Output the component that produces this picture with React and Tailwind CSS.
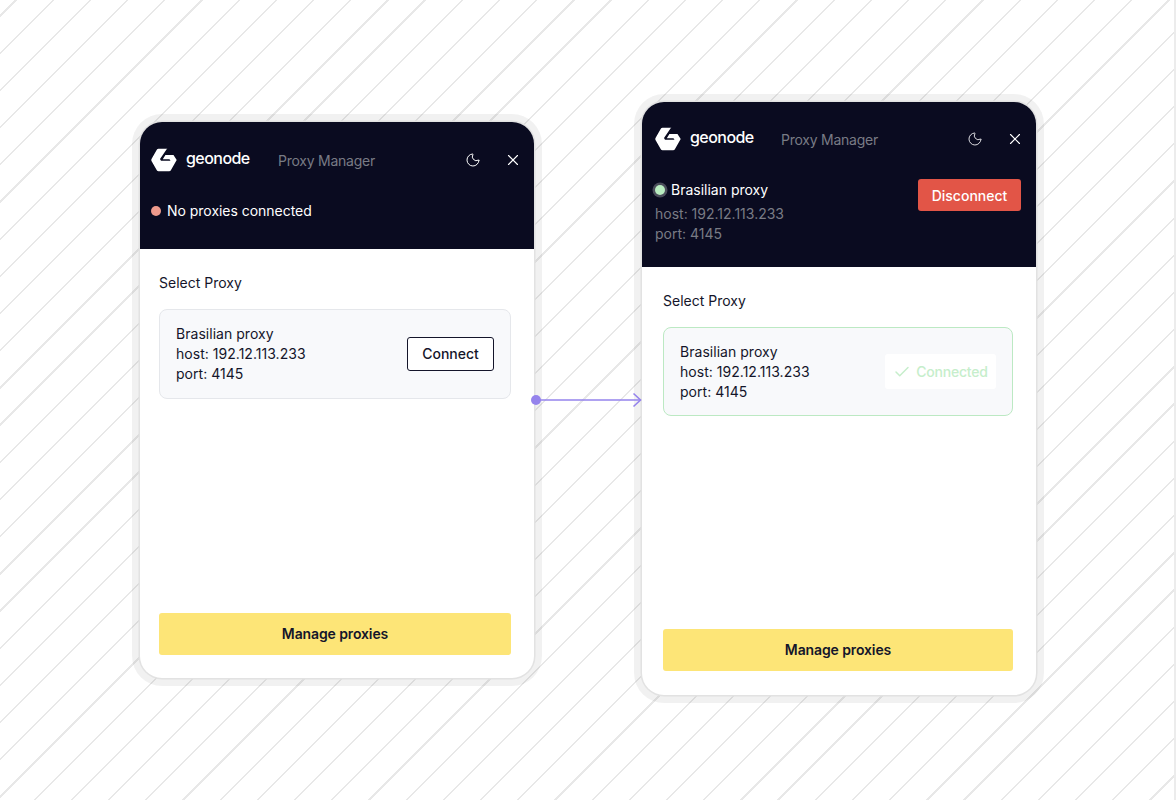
import React from "react";
import { Moon, X, Check } from "lucide-react";

function Logo() {
  return (
    <svg width="26" height="24" viewBox="0 0 26 24" className="shrink-0">
      <path fill="#fff" d="M7.5 0.8 L18.5 0.8 L25.7 12 L20 22 Q19.5 23.2 18 23.2 L7.5 23.2 Q6.3 23.2 5.8 22.2 L0.5 13 Q0 12 0.5 11 L5.8 1.8 Q6.3 0.8 7.5 0.8 Z" />
      <path fill="#0a0b20" d="M16.5 0 L26 0 L26 7 L14.4 7 L11.8 11.3 L18.5 11.3 L19.5 12.8 L10 12.8 L9 11 Z" />
    </svg>
  );
}

function Header({ titleWidth, iconMuted }) {
  return (
    <div className="flex items-center justify-between h-[24px]">
      <div className="flex items-center">
        <Logo />
        <span className={"ml-[9px] text-[16px] leading-none font-medium text-white tracking-[-0.55px] -mt-[4px] " + titleWidth}>geonode</span>
        <span className="text-[14px] text-[#797b85] tracking-[-0.25px]">Proxy Manager</span>
      </div>
      <div className="flex items-center gap-[23px] mr-[12px]">
        <Moon size={16} strokeWidth={1.5} className={iconMuted ? "text-[#dcdce0]" : "text-white"} />
        <X size={18} strokeWidth={1.5} className="text-white" />
      </div>
    </div>
  );
}

function Panel({ className, children }) {
  return (
    <div className={"w-[394px] flex flex-col rounded-[22px] overflow-hidden bg-white shadow-[0_0_0_1.5px_#e2e2e2,0_0_0_8px_rgba(0,0,0,0.055)] " + className}>
      {children}
    </div>
  );
}

function ProxyInfo() {
  return (
    <div className="text-[14px] leading-[20px] text-[#14152a] tracking-[0.03px]">
      <div>Brasilian proxy</div>
      <div>host: 192.12.113.233</div>
      <div>port: 4145</div>
    </div>
  );
}

function ManageButton({ className }) {
  return (
    <button className={"h-[42px] pb-[2px] rounded-[3px] bg-[#fde577] text-[14px] font-semibold text-[#14152a] tracking-[-0.12px] " + className}>
      Manage proxies
    </button>
  );
}

export default function App() {
  return (
    <div className="relative w-[1176px] h-[800px] overflow-hidden border-r-2 border-[#ececec] font-['Inter',sans-serif] bg-white bg-[repeating-linear-gradient(135deg,transparent_0px,transparent_10.5px,#e8e8e8_10.5px,#e8e8e8_12.1px,transparent_12.1px,transparent_26.3px)]">
      <div className="flex items-start pl-[140px] gap-[108px]">
        <Panel className="mt-[122px] h-[556px]">
          <div className="bg-[#0a0b20] h-[127px] pl-[11px] pt-[26px]">
            <Header titleWidth="w-[92px]" />
            <div className="mt-[29px] flex items-center text-[14px] leading-[20px] text-white tracking-[-0.03px]">
              <span className="w-[10px] h-[10px] rounded-full bg-[#ee9a8c] mr-[6px]" />
              No proxies connected
            </div>
          </div>
          <div className="flex-1 flex flex-col pl-[19px] pr-[23px] pt-[24px] pb-[23px]">
            <div className="text-[14px] leading-[20px] text-[#14152a]">Select Proxy</div>
            <div className="mt-[16px] h-[90px] rounded-[8px] border border-[#e5e7eb] bg-[#f8f9fb] flex items-center justify-between px-[16px]">
              <ProxyInfo />
              <button className="h-[34px] w-[87px] pb-[2px] rounded-[3px] border border-[#14152a] bg-white text-[14px] font-medium text-[#14152a]">Connect</button>
            </div>
            <ManageButton className="mt-auto" />
          </div>
        </Panel>

        <Panel className="mt-[102px] h-[593px]">
          <div className="bg-[#0a0b20] h-[165px] pl-[13px] pt-[25px]">
            <Header titleWidth="w-[91px]" iconMuted />
            <div className="mt-[29px] flex items-start justify-between pr-[15px]">
              <div className="text-[14px] leading-[20px]">
                <div className="flex items-center text-white">
                  <span className="w-[10px] h-[10px] rounded-full bg-[#b8ecc0] mr-[6px] shadow-[0_0_0_2.5px_#4a4c5a]" />
                  Brasilian proxy
                </div>
                <div className="mt-[4px] text-[#797b85]">host: 192.12.113.233</div>
                <div className="text-[#797b85]">port: 4145</div>
              </div>
              <button className="h-[32px] w-[103px] -mt-[1px] rounded-[3px] bg-[#e25547] text-[14px] font-medium text-white">Disconnect</button>
            </div>
          </div>
          <div className="flex-1 flex flex-col pl-[21px] pr-[23px] pt-[24px] pb-[24px]">
            <div className="text-[14px] leading-[20px] text-[#14152a]">Select Proxy</div>
            <div className="mt-[16px] h-[89px] rounded-[8px] border border-[#bce9c3] bg-[#f8f9fb] flex items-center justify-between px-[16px]">
              <ProxyInfo />
              <div className="h-[35px] w-[111px] rounded-[3px] bg-white flex items-center justify-center gap-[5px] text-[14px] font-medium text-[#c6eecb] tracking-[-0.2px]">
                <Check size={18} strokeWidth={2} />
                Connected
              </div>
            </div>
            <ManageButton className="mt-auto" />
          </div>
        </Panel>
      </div>

      <svg className="absolute left-[530px] top-[392px]" width="114" height="16" viewBox="0 0 114 16" fill="none">
        <circle cx="6" cy="8" r="5" fill="#9583ec" />
        <path d="M6 8 H110.5" stroke="#9583ec" strokeWidth="1.6" />
        <path d="M103.5 1.5 L110.5 8 L103.5 14.5" stroke="#9583ec" strokeWidth="1.6" />
      </svg>
    </div>
  );
}
